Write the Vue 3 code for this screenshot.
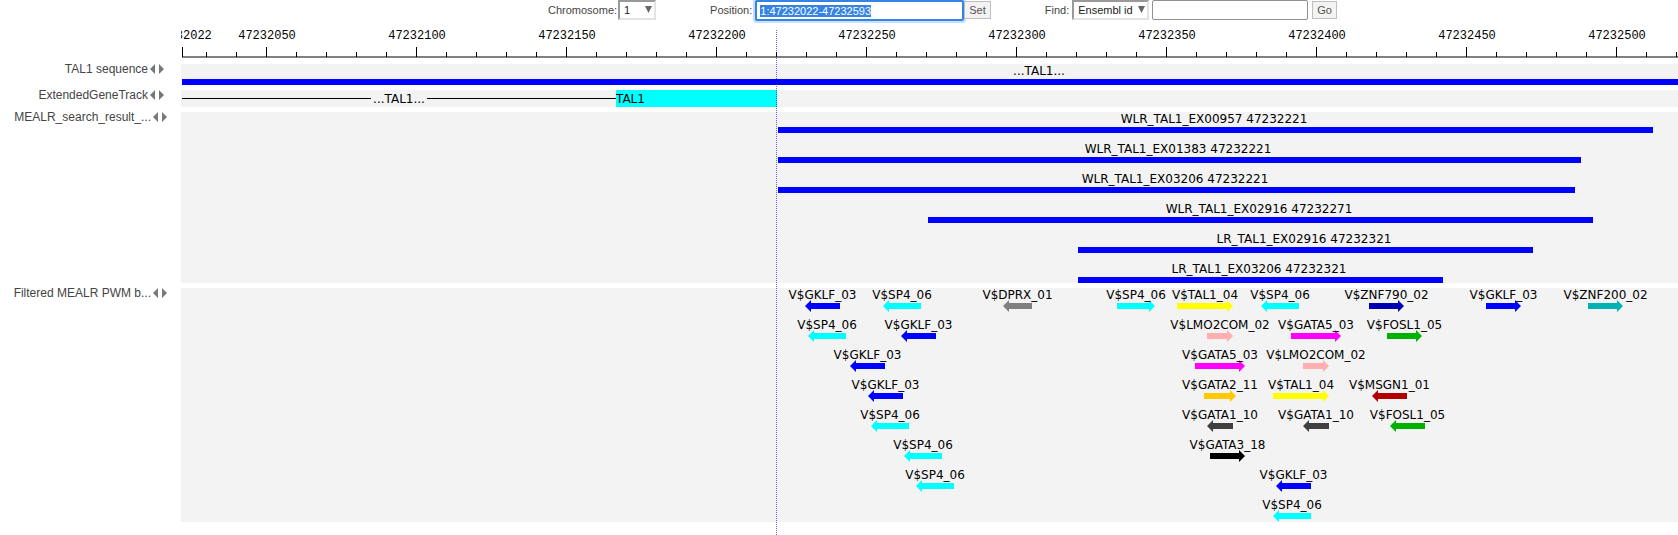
<script setup>
import { ref, onMounted } from 'vue'

const ORIGIN = 47232022
const BASE = 3

const position = ref('1:47232022-47232593')
const positionInput = ref(null)
const query = ref('')
const chromosome = ref('1')
const findBy = ref('Ensembl id')

onMounted(() => {
  positionInput.value.focus()
  positionInput.value.select()
})

const ticks = [{ at: 0, major: true, label: String(ORIGIN) }]
for (let p = 47232030; p <= 47232593; p += 10) {
  const major = p % 50 === 0
  ticks.push({ at: p - ORIGIN, major, label: major && p < 47232520 ? String(p) : '' })
}

const bar = (name, at, len) => ({ name, at, len })
const searchRows = [
  bar('WLR_TAL1_EX00957 47232221', 199, 292),
  bar('WLR_TAL1_EX01383 47232221', 199, 268),
  bar('WLR_TAL1_EX03206 47232221', 199, 266),
  bar('WLR_TAL1_EX02916 47232271', 249, 222),
  bar('LR_TAL1_EX02916 47232321', 299, 152),
  bar('LR_TAL1_EX03206 47232321', 299, 122),
]

const motifs = {
  GKLF_03: ['#0000ff', 12],
  SP4_06: ['#00ffff', 13],
  DPRX_01: ['#808080', 10],
  TAL1_04: ['#ffff00', 19],
  ZNF790_02: ['#0000b2', 12],
  ZNF200_02: ['#00b2b2', 12],
  LMO2COM_02: ['#ffafaf', 9],
  GATA5_03: ['#ff00ff', 17],
  FOSL1_05: ['#00b200', 12],
  GATA2_11: ['#ffc800', 11],
  MSGN1_01: ['#b20000', 12],
  GATA1_10: ['#404040', 9],
  GATA3_18: ['#000000', 12],
}
const site = (id, at, strand) => ({
  name: 'V$' + id, at, strand, color: motifs[id][0], len: motifs[id][1],
})
const siteRows = [
  [
    site('GKLF_03', 208, '-'), site('SP4_06', 234, '-'), site('DPRX_01', 274, '-'),
    site('SP4_06', 312, '+'), site('TAL1_04', 332, '+'), site('SP4_06', 360, '-'),
    site('ZNF790_02', 396, '+'), site('GKLF_03', 435, '+'), site('ZNF200_02', 469, '+'),
  ],
  [
    site('SP4_06', 209, '-'), site('GKLF_03', 240, '-'), site('LMO2COM_02', 342, '+'),
    site('GATA5_03', 370, '+'), site('FOSL1_05', 402, '+'),
  ],
  [site('GKLF_03', 223, '-'), site('GATA5_03', 338, '+'), site('LMO2COM_02', 374, '+')],
  [
    site('GKLF_03', 229, '-'), site('GATA2_11', 341, '+'), site('TAL1_04', 364, '+'),
    site('MSGN1_01', 397, '-'),
  ],
  [
    site('SP4_06', 230, '-'), site('GATA1_10', 342, '-'), site('GATA1_10', 374, '-'),
    site('FOSL1_05', 403, '-'),
  ],
  [site('SP4_06', 241, '-'), site('GATA3_18', 343, '+')],
  [site('SP4_06', 245, '-'), site('GKLF_03', 365, '-')],
  [site('SP4_06', 364, '-')],
]

const span = (f) => ({ left: f.at * BASE + 'px', width: f.len * BASE - 1 + 'px' })
const arrow = (f) => {
  const w = f.len * BASE - 1
  return f.strand === '+'
    ? `0,3 ${w - 6},3 ${w - 6},0 ${w},6 ${w - 6},12 ${w - 6},9 0,9`
    : `${w},3 6,3 6,0 0,6 6,12 6,9 ${w},9`
}
</script>

<template>
  <div class="page">
    <form class="toolbar" @submit.prevent>
      <div class="group">
        <label for="chromosome">Chromosome:</label>
        <span class="drop drop-short">
          <select id="chromosome" v-model="chromosome"><option>1</option></select>
          <svg class="caret" viewBox="0 0 6 6"><path d="M0 0H6L3 6Z" /></svg>
        </span>
      </div>
      <div class="group">
        <label for="position">Position:</label>
        <input id="position" ref="positionInput" v-model="position" class="position" type="text" />
        <button type="button">Set</button>
      </div>
      <div class="group find">
        <label for="find-by">Find:</label>
        <span class="drop drop-long">
          <select id="find-by" v-model="findBy"><option>Ensembl id</option></select>
          <svg class="caret" viewBox="0 0 6 6"><path d="M0 0H6L3 6Z" /></svg>
        </span>
        <input v-model="query" class="query" type="text" aria-label="Search text" />
        <button type="button">Go</button>
      </div>
    </form>

    <main class="viewer">
      <div class="line ruler-line">
        <div class="ruler">
          <div
            v-for="t in ticks" :key="t.at" class="tick" :class="{ major: t.major }"
            :style="{ left: t.at * BASE + 1 + 'px' }"
          >
            <span v-if="t.label" class="tick-label">{{ t.label }}</span>
          </div>
        </div>
      </div>

      <section class="line">
        <h2 class="name">
          TAL1 sequence
          <svg class="movers" viewBox="0 0 14 10"><path d="M5 0V10L0 5ZM9 0V10L14 5Z" /></svg>
        </h2>
        <div class="track">
          <div class="row row-bar">
            <div class="feature whole">
              <span class="label">...TAL1...</span>
              <div class="bar"></div>
            </div>
          </div>
        </div>
      </section>

      <section class="line">
        <h2 class="name">
          ExtendedGeneTrack
          <svg class="movers" viewBox="0 0 14 10"><path d="M5 0V10L0 5ZM9 0V10L14 5Z" /></svg>
        </h2>
        <div class="track gene">
          <div class="intron"><span>...TAL1...</span></div>
          <div class="exon">TAL1</div>
        </div>
      </section>

      <section class="line">
        <h2 class="name long">
          MEALR_search_result_...
          <svg class="movers" viewBox="0 0 14 10"><path d="M5 0V10L0 5ZM9 0V10L14 5Z" /></svg>
        </h2>
        <div class="track stacked">
          <div v-for="f in searchRows" :key="f.name" class="row row-bar">
            <div class="feature" :style="span(f)">
              <span class="label">{{ f.name }}</span>
              <div class="bar"></div>
            </div>
          </div>
        </div>
      </section>

      <section class="line">
        <h2 class="name long">
          Filtered MEALR PWM b...
          <svg class="movers" viewBox="0 0 14 10"><path d="M5 0V10L0 5ZM9 0V10L14 5Z" /></svg>
        </h2>
        <div class="track sites">
          <div v-for="(row, i) in siteRows" :key="i" class="row row-site">
            <div v-for="f in row" :key="f.at" class="feature" :style="span(f)">
              <svg class="arrow"><polygon :points="arrow(f)" :fill="f.color" /></svg>
              <span class="label">{{ f.name }}</span>
            </div>
          </div>
        </div>
      </section>

      <div class="guide"></div>
    </main>
  </div>
</template>

<style>
body {
  margin: 0;
  background: #fff;
}
</style>

<style scoped>
.page {
  display: flex;
  flex-direction: column;
  min-height: 100vh;
  overflow: hidden;
  color: #000;
  font: 12px/14px "DejaVu Sans", sans-serif;
}

.toolbar {
  display: flex;
  gap: 54px;
  height: 30px;
  padding-left: 548px;
  box-sizing: border-box;
  align-items: flex-start;
  font: 11px/20px "Liberation Sans", Arial, sans-serif;
  color: #444;
}
.group {
  display: flex;
  align-items: flex-start;
}
.find label {
  margin-right: 3px;
}
.drop {
  position: relative;
  display: block;
}
.drop-short {
  width: 38px;
  margin-left: 1px;
}
.drop-long {
  width: 77px;
  margin-right: 3px;
}
select {
  appearance: none;
  display: block;
  width: 100%;
  height: 20px;
  margin: 0;
  padding: 0 4px;
  border: 2px solid;
  border-color: #999 #e3e3e3 #e3e3e3 #999;
  border-radius: 0;
  background: #fff;
  color: #222;
  font: inherit;
  line-height: 16px;
}
.caret {
  position: absolute;
  right: 4px;
  top: 6px;
  width: 7px;
  height: 7px;
  fill: #666;
  pointer-events: none;
}
input {
  box-sizing: border-box;
  margin: 0;
  font: inherit;
  line-height: 16px;
  color: #444;
  border: 1px solid #8f8f9d;
  border-radius: 2px;
  outline: none;
}
.position {
  width: 209px;
  height: 21px;
  margin-left: 3px;
  padding: 0 3px;
  border: 2px solid #3584e4;
  box-shadow: 0 0 0 2px #c4e0ff;
}
.position::selection {
  background: #3584e4;
  color: #fff;
}
.query {
  width: 156px;
  height: 20px;
  margin-right: 4px;
}
button {
  height: 18px;
  margin: 1px 0 0;
  padding: 0 4px;
  border: 1px solid #bfbfbf;
  background: #f3f3f3;
  color: #555;
  font: inherit;
  line-height: 16px;
}

.viewer {
  position: relative;
  flex: 1;
}
.line {
  display: grid;
  grid-template-columns: 181px minmax(0, 1fr);
  align-items: start;
  margin-bottom: 5px;
}
.ruler-line {
  margin-bottom: 6px;
}
.ruler {
  grid-column: 2;
  position: relative;
  height: 28px;
  overflow: hidden;
}
.ruler::before {
  content: "";
  position: absolute;
  left: 1px;
  right: 0;
  bottom: 0;
  height: 2px;
  background: #808080;
}
.tick {
  position: absolute;
  bottom: 1px;
  width: 1px;
  height: 5px;
  background: #000;
}
.tick.major {
  height: 10px;
}
.tick-label {
  position: absolute;
  left: 1px;
  bottom: 15px;
  transform: translateX(-50%);
  font: 12px/12px "Liberation Mono", monospace;
}

.name {
  display: flex;
  justify-content: flex-end;
  gap: 2px;
  margin: 0;
  padding-right: 17px;
  font: 12px/10px "Liberation Sans", Arial, sans-serif;
  color: #444;
  white-space: nowrap;
}
.name.long {
  padding-right: 14px;
}
.movers {
  flex: none;
  width: 14px;
  height: 10px;
  fill: #777;
}

.track {
  overflow: hidden;
  background: #f3f3f3;
}
.row {
  position: relative;
}
.row-bar {
  height: 21px;
}
.row-bar + .row-bar {
  margin-top: 9px;
}
.row-site {
  height: 24px;
}
.row-site + .row-site {
  margin-top: 6px;
}
.feature {
  position: absolute;
  top: 0;
  height: 100%;
  display: flex;
  flex-direction: column;
  align-items: center;
}
.whole {
  left: 1px;
  width: 1714px;
}
.label {
  white-space: nowrap;
}
.stacked .label {
  padding-right: 3px;
}
.bar {
  width: 100%;
  height: 6px;
  margin-top: 1px;
  background: #00f;
}
.arrow {
  position: absolute;
  left: 0;
  bottom: 0;
  width: 100%;
  height: 12px;
}
.row-site .label {
  position: relative;
}

.gene {
  display: flex;
  height: 17px;
  padding-left: 1px;
  line-height: 19px;
}
.intron {
  display: flex;
  align-items: center;
  gap: 2px;
  width: 434px;
}
.intron span {
  align-self: flex-start;
}
.intron::before,
.intron::after {
  content: "";
  flex: 1;
  height: 1px;
  background: #000;
}
.exon {
  width: 161px;
  background: #0ff;
}

.guide {
  position: absolute;
  left: 776px;
  top: 0;
  bottom: 0;
  border-left: 1px dotted #0000ff;
  opacity: 0.6;
}
</style>
